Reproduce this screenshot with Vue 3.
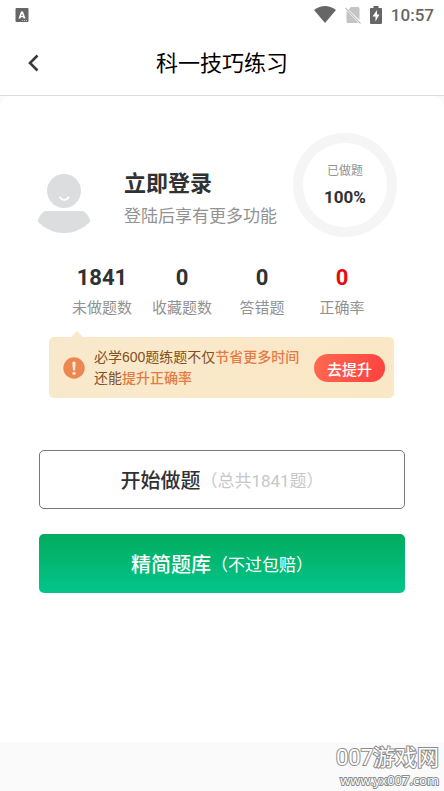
<script setup>
const stats = [
  { value: '1841', label: '未做题数' },
  { value: '0', label: '收藏题数' },
  { value: '0', label: '答错题' },
  { value: '0', label: '正确率', alert: true },
]
</script>

<template>
  <div class="page">
    <div class="status">
      <svg class="ime" width="14" height="16" viewBox="0 0 14 16" aria-hidden="true">
        <rect x="0.5" y="1" width="13" height="14" rx="1" fill="#666" />
        <path d="M3.500 11.500 6 4.500H8L10.500 11.500H8.500L8.200 10.300H5.800L5.500 11.500ZM6.200 8.900H7.800L7 6.400Z" fill="#fff" fill-rule="evenodd" />
        <path d="M7 13.500h5" stroke="#ccc" stroke-width="1" stroke-dasharray="1 1" />
      </svg>
      <div class="signals">
        <svg width="22" height="18" viewBox="0 0 22 18" aria-hidden="true">
          <path d="M0 4Q11-4 22 4L11 17Z" fill="#666" />
        </svg>
        <svg width="16" height="18" viewBox="0 0 16 18" aria-hidden="true">
          <path d="M6 1h7q1.500 0 1.500 1.500V14L3.500 3.500ZM1.500 4.500 13.500 17H3q-1.500 0-1.500-1.500Z" fill="#c4c4c4" />
          <path d="M.5 2 15.500 17.500" stroke="#c4c4c4" stroke-width="1.200" />
        </svg>
        <svg width="12" height="18" viewBox="0 0 12 18" aria-hidden="true">
          <path d="M3.500 0h5v2H11q1 0 1 1v14q0 1-1 1H1q-1 0-1-1V3q0-1 1-1h2.500Z" fill="#666" />
          <path d="M7 4 2.500 10.500h3v5L9.500 8.500H7Z" fill="#fff" />
        </svg>
        <time class="clock">10:57</time>
      </div>
    </div>

    <header class="nav">
      <button class="back" type="button" aria-label="返回">
        <svg width="12" height="18" viewBox="0 0 12 18" aria-hidden="true">
          <path d="M10.500 1.500 3 9l7.500 7.500" fill="none" stroke="#3a3a3a" stroke-width="2.600" />
        </svg>
      </button>
      <h1>科一技巧练习</h1>
    </header>

    <main class="card">
      <section class="profile">
        <svg class="avatar" width="54" height="60" viewBox="0 0 54 60" aria-hidden="true">
          <circle cx="27" cy="18" r="17" fill="#dcdddf" />
          <path d="M23 24.500q4 5 8.500 0" fill="none" stroke="#fff" stroke-width="2" stroke-linecap="round" />
          <path d="M10 38H44Q48 38 50.500 42L53 46.500Q54 48 52 50Q41 60 27 60T2 50Q0 48 1 46.500L3.500 42Q6 38 10 38Z" fill="#dcdddf" />
        </svg>
        <div class="login">
          <a href="#login">立即登录</a>
          <p>登陆后享有更多功能</p>
        </div>
        <div class="ring">
          <span>已做题</span>
          <strong>100%</strong>
        </div>
      </section>

      <ul class="stats">
        <li v-for="s in stats" :key="s.label" :class="{ alert: s.alert }">
          <strong>{{ s.value }}</strong>
          <span>{{ s.label }}</span>
        </li>
      </ul>

      <section class="tip">
        <svg width="22" height="22" viewBox="0 0 22 22" aria-hidden="true">
          <circle cx="11" cy="11" r="10.700" fill="#ed8752" />
          <path d="M9.300 5.500Q11 3.500 12.700 5.500L12 13.500H10Z" fill="#fdebd0" />
          <circle cx="11" cy="16.300" r="1.600" fill="#fdebd0" />
        </svg>
        <p>必学600题练题不仅<em>节省更多时间</em><br />还能<em>提升正确率</em></p>
        <button type="button">去提升</button>
      </section>

      <div class="actions">
        <button class="start" type="button"><b>开始做题</b><span>（总共1841题）</span></button>
        <button class="lite" type="button"><b>精简题库</b><span>（不过包赔）</span></button>
      </div>
    </main>

    <footer class="mark">
      <span class="site">007游戏网</span>
      <span class="url">www.yx007.com</span>
    </footer>
  </div>
</template>

<style>
body {
  margin: 0;
  background: #fafafa;
}
</style>

<style scoped>
.page {
  display: flex;
  flex-direction: column;
  min-height: 100vh;
  background: #fafafa;
  color: #303133;
  font-family: Roboto, 'Noto Sans CJK SC', sans-serif;
}
h1,
p,
ul {
  margin: 0;
  padding: 0;
}
button {
  padding: 0;
  border: 0;
  font-family: inherit;
  cursor: pointer;
}
.status {
  display: flex;
  align-items: center;
  justify-content: space-between;
  height: 30px;
  padding: 0 10px 0 15px;
  background: #fff;
}
.signals {
  display: flex;
  align-items: center;
  gap: 9px;
}
.clock {
  color: #666;
  font-size: 17px;
  font-weight: 500;
  line-height: 30px;
}
.nav {
  display: grid;
  grid-template-columns: 66px 1fr 66px;
  align-items: center;
  height: 65px;
  background: #fff;
  border-bottom: 1px solid #ddd;
}
.back {
  display: flex;
  align-items: center;
  justify-content: center;
  height: 48px;
  background: none;
}
h1 {
  padding-top: 2px;
  color: #000;
  font-size: 22px;
  font-weight: 400;
  line-height: 34px;
  text-align: center;
}
.card {
  flex: 1;
  padding-bottom: 48px;
  border-radius: 12px 12px 0 0;
  background: #fff;
}
.profile {
  display: flex;
  align-items: center;
  padding: 37px 47px 0 37px;
}
.avatar {
  margin-top: 36px;
}
.login {
  flex: 1;
  margin: 26px 0 0 33px;
  white-space: nowrap;
}
.login a {
  display: block;
  color: #303133;
  font-size: 22px;
  font-weight: 700;
  line-height: 36px;
  text-decoration: none;
}
.login p {
  color: #929292;
  font-size: 17px;
  line-height: 28px;
}
.ring {
  display: flex;
  flex-direction: column;
  align-items: center;
  justify-content: center;
  box-sizing: border-box;
  width: 104px;
  height: 104px;
  padding-bottom: 2px;
  border: 10px solid #f5f5f5;
  border-radius: 50%;
}
.ring span {
  color: #929292;
  font-size: 12px;
  line-height: 26px;
}
.ring strong {
  font-size: 17px;
  line-height: 26px;
}
.stats {
  display: grid;
  grid-template-columns: repeat(4, 1fr);
  padding: 26px 62px 0;
  list-style: none;
  text-align: center;
  white-space: nowrap;
}
.stats li {
  display: flex;
  flex-direction: column;
  align-items: center;
}
.stats strong {
  font-size: 22px;
  line-height: 30px;
}
.stats span {
  color: #929292;
  font-size: 15px;
  line-height: 30px;
}
.stats .alert strong {
  color: #e60c0c;
}
.tip {
  position: relative;
  display: flex;
  align-items: center;
  margin: 14px 50px 0 49px;
  padding: 10px 9px 9px 14px;
  border-radius: 5px;
  background: linear-gradient(110deg, #f9e9cc, #fae7c5);
}
.tip::before {
  position: absolute;
  top: -6px;
  left: 21px;
  border: 7px solid transparent;
  border-top: 0;
  border-bottom-color: #f9e9cc;
  content: '';
}
.tip p {
  flex: 1;
  margin-left: 9px;
  color: #84501f;
  font-family: 'Liberation Sans', 'Noto Sans CJK SC', sans-serif;
  font-size: 14px;
  line-height: 21px;
  white-space: nowrap;
}
.tip em {
  color: #e37b45;
  font-style: normal;
  font-weight: 500;
}
.tip button {
  width: 71px;
  height: 28px;
  border-radius: 14px;
  background: linear-gradient(110deg, #ff6a50, #ff4040);
  color: #fff;
  font-size: 15px;
  font-weight: 500;
}
.actions {
  display: grid;
  gap: 25px;
  margin: 52px 39px 0;
}
.actions button {
  display: flex;
  align-items: center;
  justify-content: center;
  height: 59px;
  padding-top: 2px;
  border-radius: 5px;
  line-height: 28px;
}
.actions b {
  font-size: 20px;
  font-weight: 500;
}
.actions span {
  font-size: 17px;
}
.actions .start {
  border: 1px solid #77777b;
  background: #fff;
  color: #303133;
}
.start span {
  color: #c8c8c8;
}
.lite {
  background: linear-gradient(#02ab5d, #04c58c);
  color: #fff;
}
.mark {
  display: flex;
  flex-direction: column;
  align-items: flex-end;
  height: 49px;
  padding-right: 5px;
  color: #fff;
  -webkit-text-stroke: 2px #8c8c8c;
  paint-order: stroke fill;
}
.site {
  font-size: 22px;
  line-height: 32px;
}
.url {
  font-family: 'Open Sans', sans-serif;
  font-size: 13px;
  line-height: 12px;
}
</style>
